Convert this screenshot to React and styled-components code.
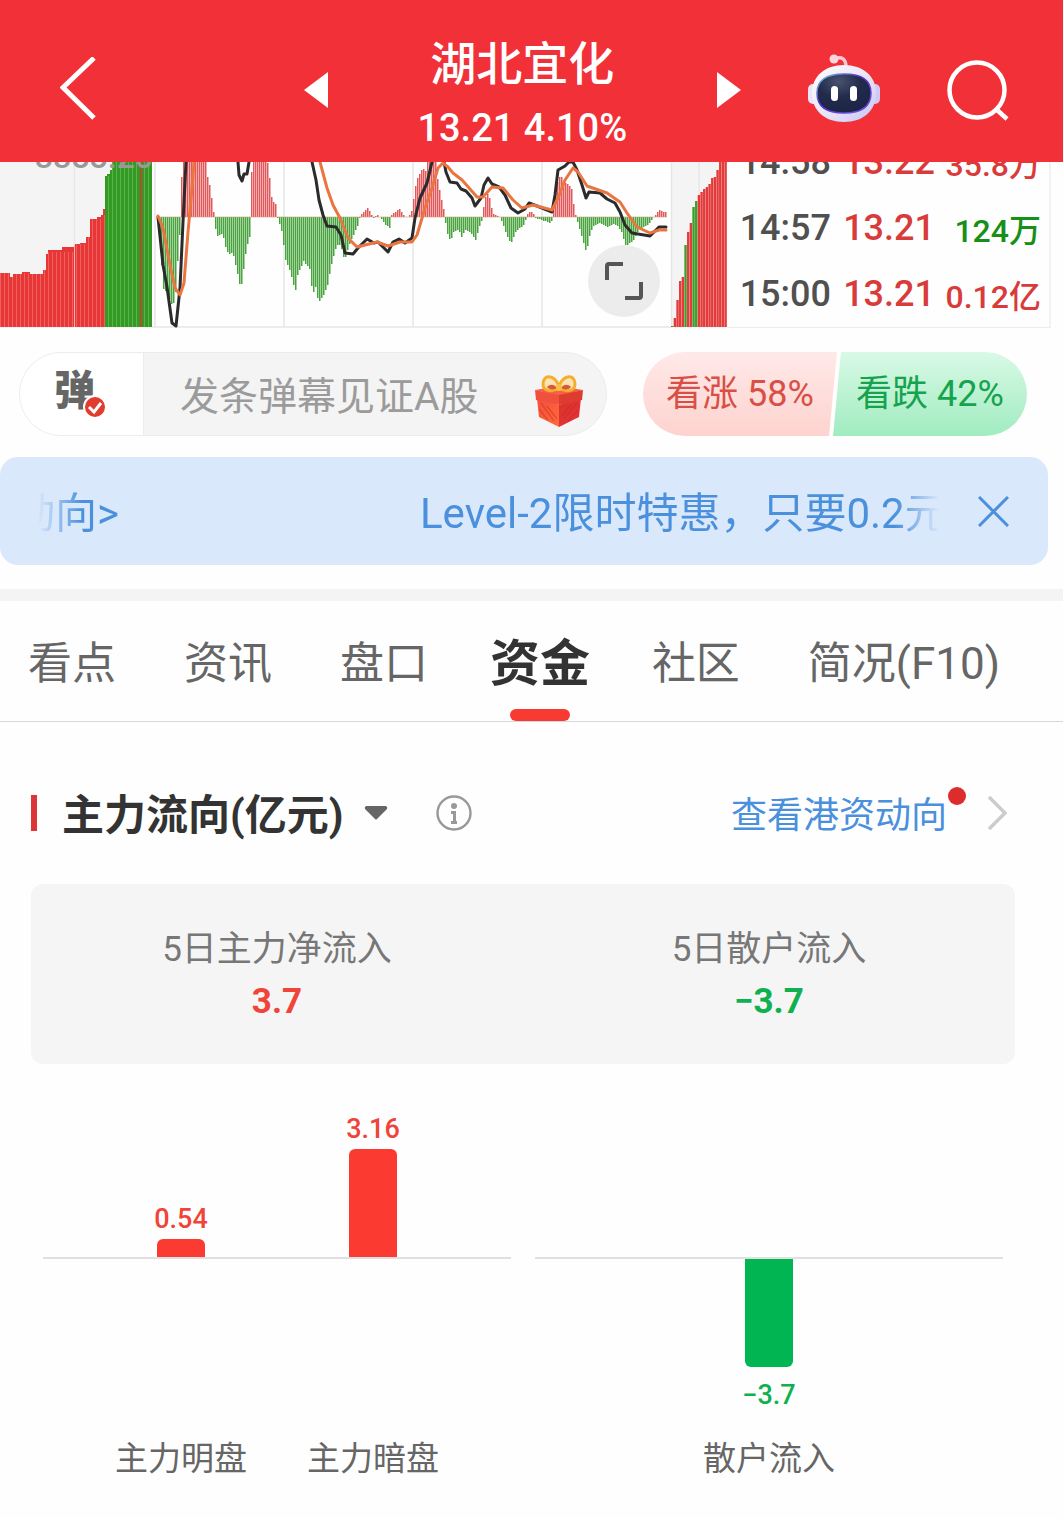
import React from "react";
import styled, { createGlobalStyle } from "styled-components";

const GlobalStyle = createGlobalStyle`
  * {
    box-sizing: border-box;
  }
  body {
    margin: 0;
    background: #fefefe;
    color: #333;
    font-family: Roboto, "Noto Sans CJK SC", sans-serif;
  }
  button {
    padding: 0;
    border: none;
    background: none;
    color: inherit;
    font: inherit;
    cursor: pointer;
  }
  a {
    color: inherit;
    text-decoration: none;
  }
  svg {
    display: block;
  }
`;

/* ---------- header ---------- */

const Header = styled.header`
  display: grid;
  grid-template-columns: 10fr 437px 11fr;
  align-items: center;
  height: 162px;
  padding: 18px 54px 0 60px;
  background: #f13038;
  color: #fff;
`;
const IconButton = styled.button`
  display: flex;
  justify-content: center;
  align-items: center;
`;
const BackButton = styled(IconButton)`
  justify-self: start;
`;
const StockSwitch = styled.div`
  display: flex;
  justify-content: space-between;
  align-items: center;
  align-self: stretch;
`;
const StockTitle = styled.div`
  align-self: flex-end;
  padding-bottom: 2px;
  text-align: center;
`;
const StockName = styled.h1`
  margin: 0;
  font-size: 46px;
  font-weight: 500;
  line-height: 64px;
`;
const StockPrice = styled.div`
  font-size: 38px;
  font-weight: 500;
  line-height: 64px;
`;
const HeaderTools = styled.div`
  display: flex;
  justify-content: flex-end;
  align-items: center;
  gap: 67px;
`;
const RobotButton = styled(IconButton)`
  padding-bottom: 4px;
`;

/* ---------- minute chart ---------- */

const Market = styled.section`
  display: grid;
  grid-template-columns: minmax(0, 1fr) 324px;
  grid-template-rows: 166px;
  margin-right: 12px;
  overflow: hidden;
`;
const ChartArea = styled.div`
  position: relative;
`;
const IndexValue = styled.span`
  position: absolute;
  top: -25px;
  left: 35px;
  color: #999;
  font-size: 32px;
  font-weight: 500;
  line-height: 40px;
`;
const ExpandButton = styled(IconButton)`
  position: absolute;
  right: 67px;
  bottom: 11px;
  width: 72px;
  height: 72px;
  border-radius: 50%;
  background: #ececec;
`;
const TradePanel = styled.div`
  display: flex;
  align-items: flex-end;
  border-right: 2px solid #f2f2f2;
  border-bottom: 1px solid #ececec;
`;
const TradeTable = styled.table`
  width: 100%;
  table-layout: fixed;
  border-collapse: collapse;
  font-size: 36px;
  font-weight: 500;
`;
const TradeCell = styled.td`
  width: 104px;
  height: 66px;
  padding: 0;
  color: ${props => props.$color || "#d93a3a"};
  text-align: right;
  white-space: nowrap;
`;
const AmountCell = styled(TradeCell)`
  width: auto;
  padding-right: 8px;
  font-size: 32px;
`;

/* ---------- comment + vote ---------- */

const ActionRow = styled.section`
  display: flex;
  gap: 36px;
  margin-top: 24px;
  padding: 0 36px 0 19px;
`;
const CommentBox = styled.div`
  display: flex;
  flex: 1;
  min-width: 0;
  height: 84px;
  border: 1px solid #ececec;
  border-radius: 42px;
  background: #f4f4f4;
  overflow: hidden;
`;
const CommentToggle = styled(IconButton)`
  width: 124px;
  padding-bottom: 6px;
  border-right: 1px solid #ececec;
  background: #fff;
  color: #666;
  font-size: 41px;
  font-weight: 900;
  line-height: 60px;
`;
const ToggleMark = styled.span`
  position: relative;
  margin-right: 14px;
`;
const CheckBadge = styled.svg`
  position: absolute;
  right: -12px;
  bottom: 2px;
`;
const CommentInput = styled.input`
  flex: 1;
  min-width: 0;
  padding: 6px 0 0 36px;
  border: none;
  outline: none;
  background: transparent;
  font-family: inherit;
  font-size: 39px;
  &::placeholder {
    color: #9b9b9b;
    opacity: 1;
  }
`;
const GiftButton = styled(IconButton)`
  padding: 14px 22px 0 0;
`;
const Vote = styled.div`
  display: flex;
  flex: 0 0 384px;
`;
const VoteButton = styled.button`
  flex: 0 0 194px;
  height: 84px;
  font-size: 36px;
  line-height: 84px;
`;
const VoteUp = styled(VoteButton)`
  border-radius: 42px 0 0 42px;
  background: linear-gradient(#ffe9e8, #fdd3cf);
  color: #d94f46;
  clip-path: polygon(0 0, 100% 0, 186px 100%, 0 100%);
`;
const VoteDown = styled(VoteButton)`
  margin-left: -4px;
  border-radius: 0 42px 42px 0;
  background: linear-gradient(#d9f9e6, #a0ecc0);
  color: #16a34f;
  clip-path: polygon(8px 0, 100% 0, 100% 100%, 0 100%);
`;

/* ---------- promo banner ---------- */

const Banner = styled.aside`
  display: flex;
  align-items: center;
  height: 108px;
  margin: 21px 15px 24px 0;
  padding: 0 39px 0 38px;
  border-radius: 18px;
  background: #dae8fb;
  color: #4a90dd;
`;
const Marquee = styled.a`
  display: flex;
  flex: 1;
  gap: 301px;
  min-width: 0;
  padding-top: 6px;
  overflow: hidden;
  font-size: 42px;
  line-height: 60px;
  white-space: nowrap;
  mask-image: linear-gradient(
    to right,
    transparent,
    #000 44px,
    #000 calc(100% - 44px),
    transparent
  );
`;
const MarqueeTail = styled.span`
  display: flex;
  flex: 0 0 81px;
  justify-content: flex-end;
  min-width: 0;
`;
const CloseButton = styled(IconButton)`
  margin-left: 39px;
`;

/* ---------- tabs ---------- */

const Tabs = styled.nav`
  display: flex;
  justify-content: space-between;
  height: 133px;
  padding: 0 63px 0 28px;
  border-top: 12px solid #f4f4f4;
  border-bottom: 1px solid #d8d8d8;
`;
const Tab = styled.a`
  position: relative;
  margin: ${props => (props.$active ? "0 -6px" : "0")};
  color: ${props => (props.$active ? "#333" : "#666")};
  font-size: ${props => (props.$active ? "50px" : "44px")};
  font-weight: ${props => (props.$active ? 700 : 400)};
  line-height: 126px;
  white-space: nowrap;
  &::after {
    content: "";
    display: ${props => (props.$active ? "block" : "none")};
    position: absolute;
    bottom: 0;
    left: 20px;
    width: 60px;
    height: 12px;
    border-radius: 6px;
    background: #f93a32;
  }
`;

/* ---------- capital flow ---------- */

const Flow = styled.main`
  padding: 0 48px 32px 31px;
`;
const FlowHead = styled.div`
  display: flex;
  align-items: center;
  height: 162px;
  padding-top: 20px;
`;
const FlowTitle = styled.h2`
  display: flex;
  align-items: center;
  gap: 25px;
  margin: 0;
  padding-top: 6px;
  font-size: 42px;
  font-weight: 700;
  line-height: 60px;
  &::before {
    content: "";
    width: 6px;
    height: 36px;
    margin-bottom: 6px;
    background: #dc3535;
  }
`;
const DropButton = styled(IconButton)`
  margin: 0 48px 0 21px;
`;
const FlowLink = styled.a`
  display: flex;
  align-items: center;
  margin-left: auto;
  padding: 6px 8px 0 0;
  color: #4a90dd;
  font-size: 36px;
  line-height: 60px;
  svg {
    margin-bottom: 6px;
  }
`;
const RedDot = styled.i`
  align-self: flex-start;
  width: 18px;
  height: 18px;
  margin: 1px 21px 0 1px;
  border-radius: 50%;
  background: #dd2c2c;
`;
const Summary = styled.dl`
  display: grid;
  grid-template-columns: 1fr 1fr;
  margin: 0;
  padding: 40px 0 36px;
  border-radius: 12px;
  background: #f5f5f5;
  text-align: center;
`;
const SummaryLabel = styled.dt`
  color: #777;
  font-size: 35px;
  line-height: 52px;
`;
const SummaryValue = styled.dd`
  margin: 0;
  color: ${props => (props.$value < 0 ? "#0fb04f" : "#f04438")};
  font-size: 35px;
  font-weight: 700;
  line-height: 52px;
`;
const Charts = styled.div`
  display: grid;
  grid-template-columns: 1fr 1fr;
  gap: 24px;
  padding: 0 12px;
`;
const Half = styled.div`
  display: flex;
  justify-content: center;
`;
const Above = styled(Half)`
  align-items: flex-end;
  height: 195px;
  border-bottom: 2px solid #e0e0e0;
`;
const Below = styled(Half)`
  height: 172px;
`;
const Labels = styled(Half)`
  color: #666;
  font-size: 33px;
  line-height: 56px;
`;
const Slot = styled.div`
  display: flex;
  flex-direction: column;
  align-items: center;
  width: 192px;
`;
const Bar = styled.div`
  width: 48px;
  border-radius: ${props => (props.$down ? "0 0 6px 6px" : "6px 6px 0 0")};
  background: ${props => (props.$down ? "#00b552" : "#fb3b31")};
`;
const BarValue = styled.span`
  margin-top: ${props => (props.$down ? "8px" : "0")};
  color: ${props => (props.$down ? "#0fb04f" : "#f04438")};
  font-size: 27px;
  font-weight: 500;
  line-height: 40px;
`;

/* ---------- data ---------- */

const trades = [
  { time: "14:58", price: "13.22", amount: "35.8万", color: "#d93a3a" },
  { time: "14:57", price: "13.21", amount: "124万", color: "#169016" },
  { time: "15:00", price: "13.21", amount: "0.12亿", color: "#d93a3a" }
];

const tabs = ["看点", "资讯", "盘口", "资金", "社区", "简况(F10)"];

const flowCharts = [
  {
    max: 3.16,
    items: [{ name: "主力明盘", value: 0.54 }, { name: "主力暗盘", value: 3.16 }]
  },
  { max: 3.7, items: [{ name: "散户流入", value: -3.7 }] }
];

const BAR_MAX = 108;
const CHART_H = 166;
const ZERO = 55;

// [x, height] along the histogram, positive is above the zero line
const macd = [
  [157, 0], [163, -72], [167, -76], [172, -90], [174, -82], [176, -68],
  [178, -20], [179, -18], [180, 20], [182, 60], [205, 60], [207, 40], [210, 28],
  [212, 9], [213, 5], [214, -8], [217, -19], [222, -17], [225, -30],
  [228, -38], [232, -35], [236, -52], [240, -72], [242, -62], [244, -42],
  [248, -22], [249, -20], [250, 30], [252, 60], [266, 60], [268, 48],
  [270, 29], [272, 10], [274, 20], [276, 5], [277, -1], [282, -17],
  [284, -40], [287, -48], [290, -55], [292, -66], [295, -73], [297, -58],
  [303, -44], [309, -52], [312, -78], [315, -70], [318, -86], [323, -78],
  [327, -68], [331, -47], [336, -28], [340, -28], [344, -44], [348, -30],
  [352, -20], [357, -9], [359, -1], [360, 2], [367, 9], [371, 2], [373, -1],
  [377, 2], [380, -1], [385, -8], [389, -11], [390, 0], [392, 3], [399, 8],
  [403, 2], [406, -1], [410, 3], [412, 8], [414, 27], [417, 39], [422, 49],
  [425, 46], [428, 60], [436, 60], [437, 38], [440, 22], [443, 8], [444, 4],
  [445, -6], [447, -17], [450, -24], [453, -15], [458, -12], [461, -20],
  [465, -13], [470, -16], [475, -23], [479, -9], [482, -1], [483, 10],
  [485, 20], [488, 25], [490, 12], [493, 3], [498, 1], [500, -2], [504, -12],
  [508, -23], [511, -25], [515, -15], [523, -8], [526, 0], [528, 5],
  [532, 5], [535, -1], [550, -6], [552, -2], [553, 12], [557, 35], [560, 43],
  [563, 35], [568, 32], [571, 28], [573, 13], [575, 2], [577, -5],
  [581, -19], [586, -36], [588, -22], [592, -10], [600, -6], [607, -10],
  [612, -7], [617, -9], [622, -17], [624, -28], [627, -28], [633, -23],
  [638, -13], [648, -8], [653, 0], [655, 2], [659, 7], [663, 5], [667, 4]
];

const blackLines = [
  "158,55 163,103 167,125 172,161 176,164 180,126 183,60 186,0",
  "238,0 239,13 242,19 244,12 247,12 249,0",
  "312,0 316,18 319,38 323,53 327,64 336,65 341,73 345,91 353,92 358,86 367,77 374,81 378,80 388,90 393,80 399,77 405,81 412,76 415,56 420,36 427,21 432,0",
  "444,0 446,10 450,20 457,21 461,27 466,29 472,36 475,44 481,36 484,23 488,16 492,22 499,25 505,33 511,46 518,51 525,47 529,41 537,44 552,50 555,33 558,8 565,4 569,0 573,0 577,8 582,23 586,36 589,30 600,31 607,37 615,41 620,50 625,63 632,71 650,74 659,65 666,65"
];

const orangeLines = [
  "158,54 163,66 170,103 175,126 180,133 184,121 188,70 192,26 194,0",
  "320,0 327,26 333,43 340,56 348,76 357,85 365,83 377,80 388,84 400,80 412,80 417,73 425,46 432,26 438,6 443,1 448,5 453,11 462,18 470,27 477,35 483,35 492,25 503,26 513,38 522,46 533,43 552,48 558,36 565,18 573,6 578,10 587,24 607,31 620,40 627,51 637,65 650,71 659,68 666,68"
];

// queue depth on the right side, [top, isGreen]
const depth = [
  [164, true], [156], [138], [119], [115], [83, true], [70], [61], [45, true],
  [39, true], [33], [30], [27], [25], [22], [16], [15], [8], [0], [0], [0]
];

const histogram = () => {
  const bars = [];
  let k = 0;
  for (let x = macd[0][0]; x < 667; x += 2) {
    while (macd[k + 1][0] < x) k++;
    const [x0, h0] = macd[k];
    const [x1, h1] = macd[k + 1];
    bars.push({ x, h: Math.round(h0 + ((h1 - h0) * (x - x0)) / (x1 - x0)) });
  }
  return bars;
};

const MinuteChart = () => (
  <svg
    width="100%"
    height={CHART_H}
    viewBox={`0 0 727 ${CHART_H}`}
    preserveAspectRatio="none"
    aria-hidden="true"
  >
    <defs>
      <pattern id="stripe" width="4" height="8" patternUnits="userSpaceOnUse">
        <rect width="1" height="8" fill="#fff" opacity="0.22" />
      </pattern>
    </defs>
    <path d="M0 0H152V166H0ZM672 0H727V166H672Z" fill="#f4f4f4" />
    <path
      d="M74.5 0V165M155 0V165M284 0V165M413 0V165M542 0V165M671.5 0V165M699 0V165M152 165H672"
      stroke="#e6e6e6"
      strokeWidth="1.5"
    />
    <path
      d="M0 165V111H10V115H13V112H22V110H30V112H43V108H46V92H48V88H62V85H75V82H80V81H86V75H90V57H97V55H101V53H103V47H105V165Z"
      fill="#e83535"
    />
    <path d="M105 165V14H107V12H110V8H112V0H152V165Z" fill="#319b22" />
    <path
      d="M0 165V111H43V108H46V90H75V82H86V75H90V57H101V53H105V14H110V0H152V165Z"
      fill="url(#stripe)"
    />
    <path d="M74.5 83V165" stroke="#f5b5b5" />
    <path d="M141 0V165" stroke="#92602e" strokeWidth="3" />
    {histogram().map(({ x, h }) => (
      <rect
        key={x}
        x={x}
        y={h > 0 ? ZERO - h : ZERO}
        width="1.5"
        height={Math.abs(h)}
        fill={h > 0 ? "#e2585b" : "#49a33e"}
      />
    ))}
    <path d="M157 55H667" stroke="#c9a07a" strokeWidth="0.6" />
    {depth.map(([top, green], i) => (
      <rect
        key={i}
        x={671 + i * 2.67}
        y={top}
        width="2.4"
        height={165 - top}
        fill={green ? "#3c9f2c" : "#e53a3a"}
      />
    ))}
    <g fill="none" strokeWidth="3" strokeLinejoin="round" strokeLinecap="round">
      {blackLines.map(points => (
        <polyline key={points} points={points} stroke="#2b2b2b" />
      ))}
      {orangeLines.map(points => (
        <polyline key={points} points={points} stroke="#ea7540" />
      ))}
    </g>
  </svg>
);

const Robot = () => (
  <svg width="72" height="68" viewBox="0 0 72 68" aria-hidden="true">
    <defs>
      <linearGradient id="shell" x1="0" y1="0" x2="1" y2="1">
        <stop offset="0" stopColor="#fff" />
        <stop offset="0.6" stopColor="#e6e0f6" />
        <stop offset="1" stopColor="#c3c4f5" />
      </linearGradient>
      <linearGradient id="rim" x1="0" y1="0" x2="1" y2="1">
        <stop offset="0" stopColor="#6fd3d8" />
        <stop offset="0.4" stopColor="#5a2fc4" />
        <stop offset="1" stopColor="#6d55e8" />
      </linearGradient>
      <radialGradient id="visor" cx="0.4" cy="0.2" r="0.8">
        <stop offset="0" stopColor="#4a5270" />
        <stop offset="0.5" stopColor="#222b4c" />
        <stop offset="1" stopColor="#1c2546" />
      </radialGradient>
    </defs>
    <path d="M26 5C34 2 38 5 38 13" fill="none" stroke="#f9c8d2" strokeWidth="3.5" />
    <circle cx="26" cy="5" r="4.5" fill="#fbd5dc" />
    <rect x="0" y="30" width="12" height="20" rx="5" fill="#e9e4fa" />
    <rect x="60" y="30" width="12" height="20" rx="5" fill="#cfcaf5" />
    <path
      d="M36 11C55 11 68 22 68 39C68 57 55 68 36 68C17 68 4 57 4 39C4 22 17 11 36 11Z"
      fill="url(#shell)"
    />
    <path
      d="M36 20C54 20 63 26 63 39C63 53 54 59 36 59C18 59 9 53 9 39C9 26 18 20 36 20Z"
      fill="url(#visor)"
      stroke="url(#rim)"
      strokeWidth="1.5"
    />
    <rect x="23" y="32" width="7" height="15" rx="3.5" fill="#fff" />
    <rect x="42" y="32" width="7" height="15" rx="3.5" fill="#fff" />
  </svg>
);

const Gift = () => (
  <svg width="50" height="54" viewBox="0 0 50 54" aria-hidden="true">
    <defs>
      <linearGradient id="giftLeft" x1="0" y1="0" x2="1" y2="1">
        <stop offset="0" stopColor="#f2503a" />
        <stop offset="1" stopColor="#ff6a3c" />
      </linearGradient>
      <linearGradient id="giftRight" x1="0" y1="0" x2="1" y2="1">
        <stop offset="0" stopColor="#d93429" />
        <stop offset="1" stopColor="#e8303f" />
      </linearGradient>
    </defs>
    <path d="M1 16L25 12L49 16L25 22Z" fill="#f4624a" />
    <path d="M3 24L25 31V53L5 43Z" fill="url(#giftLeft)" />
    <path d="M47 24L25 31V53L45 43Z" fill="url(#giftRight)" />
    <path d="M1 16L25 21V31L2 26Z" fill="#f0503c" />
    <path d="M49 16L25 21V31L48 26Z" fill="#dd3c2e" />
    <path
      d="M7 29L20 47M13 32L23 45M5 35L14 46M43 29L30 45M44 36L34 47M37 31L28 42"
      stroke="#c9261f"
      strokeWidth="1.5"
      opacity="0.4"
    />
    <path
      d="M25 14C19 18 9 18 9 10C9 0 20 0 25 12C30 0 41 0 41 10C41 18 31 18 25 14Z"
      fill="#fbe3b4"
      stroke="#f5ae2c"
      strokeWidth="3"
    />
    <path d="M13 13C16 10 20 10 23 14C20 16 15 16 13 13ZM37 13C34 10 30 10 27 14C30 16 35 16 37 13Z" fill="#d9573a" />
    <rect x="22" y="10" width="6" height="7" rx="3" fill="#f9bf45" />
  </svg>
);

const signed = value => (value < 0 ? `−${Math.abs(value)}` : `${value}`);

const FlowBar = ({ item, max }) => {
  const down = item.value < 0;
  const bar = (
    <Bar
      $down={down}
      style={{ height: Math.round((Math.abs(item.value) / max) * BAR_MAX) }}
    />
  );
  const value = <BarValue $down={down}>{signed(item.value)}</BarValue>;
  return (
    <Slot>
      {down ? bar : value}
      {down ? value : bar}
    </Slot>
  );
};

const FlowChart = ({ items, max }) => (
  <div>
    <Above>
      {items.map(item =>
        item.value > 0 ? (
          <FlowBar key={item.name} item={item} max={max} />
        ) : (
          <Slot key={item.name} />
        )
      )}
    </Above>
    <Below>
      {items.map(item =>
        item.value < 0 ? (
          <FlowBar key={item.name} item={item} max={max} />
        ) : (
          <Slot key={item.name} />
        )
      )}
    </Below>
    <Labels>
      {items.map(item => (
        <Slot key={item.name}>{item.name}</Slot>
      ))}
    </Labels>
  </div>
);

const App = () => {
  return (
    <>
      <GlobalStyle />
      <Header>
        <BackButton aria-label="返回">
          <svg width="38" height="66" viewBox="0 0 38 66">
            <path d="M34 1L3 30.5L34 61" fill="none" stroke="#fff" strokeWidth="5" />
          </svg>
        </BackButton>
        <StockSwitch>
          <IconButton aria-label="上一只">
            <svg width="24" height="36" viewBox="0 0 24 36">
              <path d="M24 0V36L0 18Z" fill="#fff" />
            </svg>
          </IconButton>
          <StockTitle>
            <StockName>湖北宜化</StockName>
            <StockPrice>13.21 4.10%</StockPrice>
          </StockTitle>
          <IconButton aria-label="下一只">
            <svg width="24" height="36" viewBox="0 0 24 36">
              <path d="M0 0V36L24 18Z" fill="#fff" />
            </svg>
          </IconButton>
        </StockSwitch>
        <HeaderTools>
          <RobotButton aria-label="智能助手">
            <Robot />
          </RobotButton>
          <IconButton aria-label="搜索">
            <svg width="62" height="62" viewBox="0 0 62 62">
              <g fill="none" stroke="#fff" strokeWidth="4.5">
                <circle cx="30" cy="31" r="27.5" />
                <path d="M49 50L60 60" />
              </g>
            </svg>
          </IconButton>
        </HeaderTools>
      </Header>

      <Market>
        <ChartArea>
          <MinuteChart />
          <IndexValue>3388.20</IndexValue>
          <ExpandButton aria-label="全屏">
            <svg width="38" height="38" viewBox="0 0 38 38">
              <path
                d="M2 18V4Q2 2 4 2H18M36 20V34Q36 36 34 36H20"
                fill="none"
                stroke="#555"
                strokeWidth="4"
              />
            </svg>
          </ExpandButton>
        </ChartArea>
        <TradePanel>
          <TradeTable>
            <tbody>
              {trades.map(row => (
                <tr key={row.time}>
                  <TradeCell $color="#505050">{row.time}</TradeCell>
                  <TradeCell>{row.price}</TradeCell>
                  <AmountCell $color={row.color}>{row.amount}</AmountCell>
                </tr>
              ))}
            </tbody>
          </TradeTable>
        </TradePanel>
      </Market>

      <ActionRow>
        <CommentBox>
          <CommentToggle aria-label="弹幕开关">
            <ToggleMark>
              弹
              <CheckBadge width="24" height="24" viewBox="0 0 24 24">
                <circle cx="12" cy="12" r="11" fill="#e23b30" stroke="#fff" strokeWidth="2" />
                <path d="M6 12L11 17L18 8" fill="none" stroke="#fff" strokeWidth="3" />
              </CheckBadge>
            </ToggleMark>
          </CommentToggle>
          <CommentInput aria-label="弹幕" placeholder="发条弹幕见证A股" />
          <GiftButton aria-label="礼物">
            <Gift />
          </GiftButton>
        </CommentBox>
        <Vote>
          <VoteUp>看涨 58%</VoteUp>
          <VoteDown>看跌 42%</VoteDown>
        </Vote>
      </ActionRow>

      <Banner>
        <Marquee href="#level2">
          <MarqueeTail>动向&gt;</MarqueeTail>
          <span>Level-2限时特惠，只要0.2元</span>
        </Marquee>
        <CloseButton aria-label="关闭">
          <svg width="31" height="31" viewBox="0 0 31 31">
            <path d="M1 1L30 30M30 1L1 30" stroke="#4a90dd" strokeWidth="3" />
          </svg>
        </CloseButton>
      </Banner>

      <Tabs>
        {tabs.map(name => (
          <Tab key={name} href="#tab" $active={name === "资金"}>
            {name}
          </Tab>
        ))}
      </Tabs>

      <Flow>
        <FlowHead>
          <FlowTitle>主力流向(亿元)</FlowTitle>
          <DropButton aria-label="切换">
            <svg width="24" height="14" viewBox="0 0 24 14">
              <path d="M2 0H22Q24 1 23 3L13 13Q12 14 11 13L1 3Q0 1 2 0Z" fill="#666" />
            </svg>
          </DropButton>
          <IconButton aria-label="说明">
            <svg width="36" height="36" viewBox="0 0 36 36">
              <circle cx="18" cy="18" r="16.5" fill="none" stroke="#999" strokeWidth="2.4" />
              <circle cx="18" cy="11" r="3" fill="#999" />
              <path d="M15 17.5H18.5V27M15 27.5H21" fill="none" stroke="#999" strokeWidth="3" />
            </svg>
          </IconButton>
          <FlowLink href="#hk">
            查看港资动向
            <RedDot />
            <svg width="20" height="36" viewBox="0 0 20 36">
              <path d="M2 2L18 18L2 34" fill="none" stroke="#ccc" strokeWidth="3.5" />
            </svg>
          </FlowLink>
        </FlowHead>

        <Summary>
          <div>
            <SummaryLabel>5日主力净流入</SummaryLabel>
            <SummaryValue $value={3.7}>{signed(3.7)}</SummaryValue>
          </div>
          <div>
            <SummaryLabel>5日散户流入</SummaryLabel>
            <SummaryValue $value={-3.7}>{signed(-3.7)}</SummaryValue>
          </div>
        </Summary>

        <Charts>
          {flowCharts.map(chart => (
            <FlowChart key={chart.max} items={chart.items} max={chart.max} />
          ))}
        </Charts>
      </Flow>
    </>
  );
};

export default App;
